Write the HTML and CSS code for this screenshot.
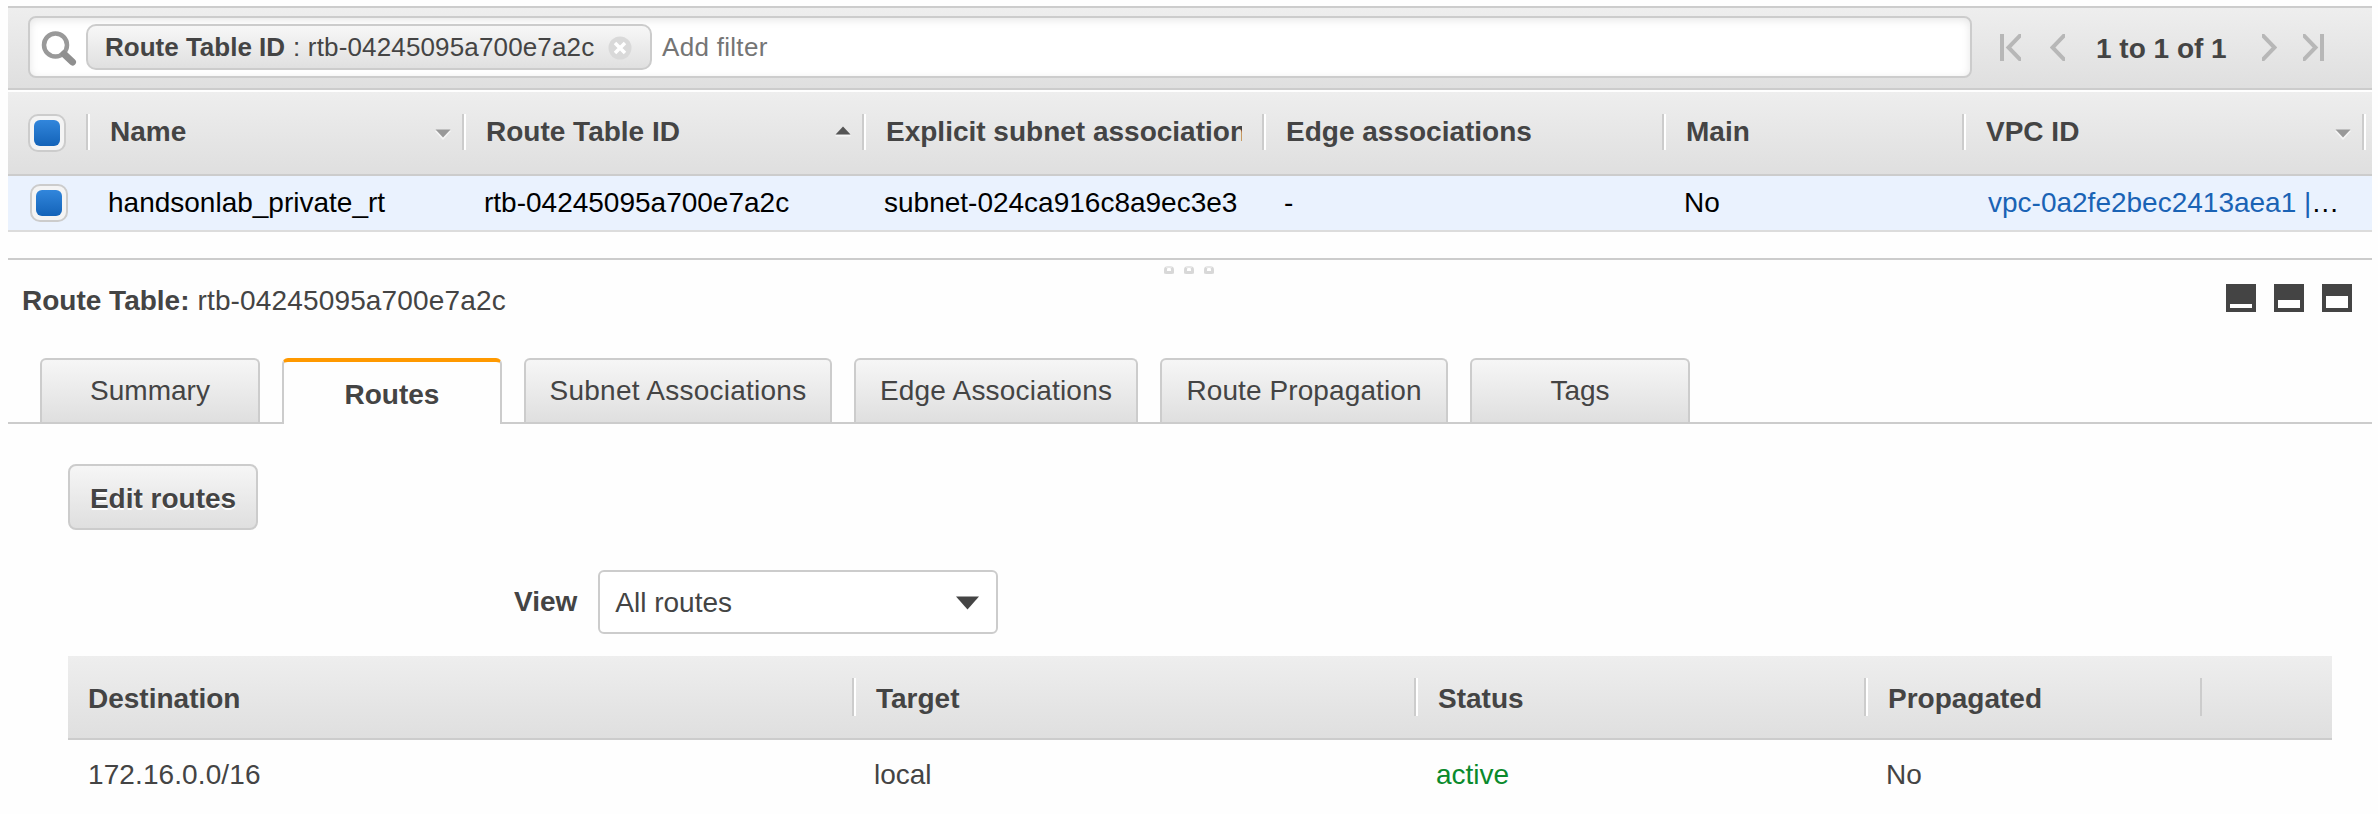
FILE: index.html
```html
<!DOCTYPE html>
<html lang="en">
<head>
<meta charset="utf-8">
<title>Route Tables</title>
<link rel="stylesheet" href="styles.css">
</head>
<body>
<div class="filterbar">
  <div class="search">
    <svg class="search-icon" width="36" height="38" viewBox="0 0 36 38"><circle cx="14.500" cy="14" r="11.500" fill="none" stroke="#999" stroke-width="4.500"/><path d="M23 23L31.500 31" stroke="#8f8f8f" stroke-width="7" stroke-linecap="round"/></svg>
    <div class="chip"><b>Route Table ID</b><span class="chip-value">: rtb-04245095a700e7a2c</span>
      <svg class="chip-close" width="24" height="24" viewBox="0 0 24 24"><circle cx="12" cy="12" r="11.500" fill="#d9d9d9"/><path d="M7 7L17 17M17 7L7 17" stroke="#fff" stroke-width="3.500"/></svg>
    </div>
    <span class="placeholder">Add filter</span>
  </div>
  <div class="pager">
    <svg class="first" width="21" height="27" viewBox="0 0 21 27"><path d="M2 0V27M24 -2.500L8.500 13.500L24 29.500" fill="none" stroke="#b7b7b7" stroke-width="4"/></svg>
    <svg class="prev" width="15" height="27" viewBox="0 0 15 27"><path d="M18 -2.500L2.500 13.500L18 29.500" fill="none" stroke="#b7b7b7" stroke-width="4"/></svg>
    <b class="range">1 to 1 of 1</b>
    <svg class="next" width="15" height="27" viewBox="0 0 15 27"><path d="M-3 -2.500L12.500 13.500L-3 29.500" fill="none" stroke="#b7b7b7" stroke-width="4"/></svg>
    <svg class="last" width="21" height="27" viewBox="0 0 21 27"><path d="M19 0V27M-3 -2.500L12.500 13.500L-3 29.500" fill="none" stroke="#b7b7b7" stroke-width="4"/></svg>
  </div>
</div>
<div class="grid grid-head">
  <div class="check-cell"><span class="check"></span></div>
  <div class="th">Name<svg class="sort" width="16" height="12" viewBox="0 0 16 12"><path d="M0 2H16L8 11Z" fill="#f6f6f6"/><path d="M0.500 0.500H15.500L8 8.500Z" fill="#999"/></svg></div>
  <div class="th">Route Table ID<svg class="sort sort-up" width="16" height="12" viewBox="0 0 16 12"><path d="M0.500 8.500H15.500V10.500H0.500Z" fill="#f6f6f6"/><path d="M0.500 8.500H15.500L8 0.500Z" fill="#555"/></svg></div>
  <div class="th"><span class="clip">Explicit subnet associations</span></div>
  <div class="th">Edge associations</div>
  <div class="th">Main</div>
  <div class="th">VPC ID<svg class="sort" width="16" height="12" viewBox="0 0 16 12"><path d="M0 2H16L8 11Z" fill="#f6f6f6"/><path d="M0.500 0.500H15.500L8 8.500Z" fill="#999"/></svg></div>
  <div class="th end"></div>
</div>
<div class="grid grid-row">
  <div class="check-cell"><span class="check"></span></div>
  <div class="td">handsonlab_private_rt</div>
  <div class="td">rtb-04245095a700e7a2c</div>
  <div class="td">subnet-024ca916c8a9ec3e3</div>
  <div class="td">-</div>
  <div class="td">No</div>
  <div class="td vpc"><a class="link">vpc-0a2fe2bec2413aea1 |</a>…</div>
</div>
<div class="splitter">
  <i class="grip"></i><i class="grip"></i><i class="grip"></i>
</div>
<div class="detail-head">
  <div class="detail-title"><b>Route Table:</b><span class="detail-id">rtb-04245095a700e7a2c</span></div>
  <div class="layouts">
    <span class="layout"><i class="pane pane-s"></i></span>
    <span class="layout"><i class="pane pane-m"></i></span>
    <span class="layout"><i class="pane pane-l"></i></span>
  </div>
</div>
<div class="tabs">
  <div class="tab w1">Summary</div>
  <div class="tab active w1">Routes</div>
  <div class="tab w3">Subnet Associations</div>
  <div class="tab w4">Edge Associations</div>
  <div class="tab w5">Route Propagation</div>
  <div class="tab w1">Tags</div>
</div>
<div class="panel">
  <button class="edit">Edit routes</button>
  <div class="view">
    <b>View</b>
    <div class="select"><span>All routes</span><svg width="23" height="14" viewBox="0 0 23 14"><path d="M0 0.500H23L11.500 13.500Z" fill="#444"/></svg></div>
  </div>
  <div class="routes routes-head">
    <div class="rh">Destination</div><div class="rh">Target</div><div class="rh">Status</div><div class="rh">Propagated</div><div class="rh last-col"></div>
  </div>
  <div class="routes routes-row">
    <div class="rd">172.16.0.0/16</div><div class="rd">local</div><div class="rd ok">active</div><div class="rd">No</div>
  </div>
</div>
</body>
</html>
```
FILE: styles.css
```css
* { box-sizing: border-box; }
html, body { margin: 0; background: #fefefe; }
body {
  width: 2378px; height: 814px; overflow: hidden;
  padding: 6px 6px 0 8px;
  font-family: "Liberation Sans", Arial, sans-serif;
  font-size: 28px; line-height: 32px; color: #444;
  white-space: nowrap;
}
svg { display: block; flex: none; }
.filterbar {
  height: 84px; display: flex; align-items: flex-start;
  padding: 8px 0 0 20px;
  border-top: 2px solid #ccc; border-bottom: 2px solid #ccc;
  background: linear-gradient(#eee, #dfdfdf);
}
.search {
  width: 1944px; height: 62px; display: flex; align-items: center;
  border: 2px solid #ccc; border-radius: 8px; background: #fff;
  box-shadow: inset 0 2px 8px rgba(0,0,0,.1);
  padding-left: 11px; color: #757575;
}
.search-icon { margin-top: 5px; }
.chip {
  margin-left: 9px; width: 566px; height: 46px;
  display: flex; align-items: center; padding: 0 18px 0 17px;
  border: 2px solid #ccc; border-radius: 10px;
  background: linear-gradient(#f7f7f7, #e0e0e0); color: #444;
  font-size: 26px;
}
.chip-value { margin-left: 8px; letter-spacing: .15px; }
.chip-close { margin: 2px 0 0 auto; }
.placeholder { margin-left: 10px; font-size: 26px; letter-spacing: .3px; }
.pager { display: flex; align-items: center; height: 62px; }
.first { margin-left: 28px; }
.prev { margin-left: 29px; }
.range { width: 132px; margin: 3px 0 0 31px; }
.next { margin-left: 34px; }
.last { margin-left: 26px; }
.grid { display: grid; grid-template-columns: 78px 376px 400px 400px 400px 300px 400px 10px; }
.grid-head {
  height: 84px; margin-top: 2px; align-items: start;
  background: linear-gradient(#eee, #dfdfdf);
  border-bottom: 2px solid #ccc; font-weight: bold;
}
.check-cell { padding: 22px 0 0 20px; }
.check {
  display: block; width: 38px; height: 38px;
  border: 2px solid #ccc; border-radius: 10px; background: #f4f4f4; padding: 4px;
}
.check::before {
  content: ""; display: block; width: 26px; height: 26px;
  border-radius: 6px; background: linear-gradient(#3186dc, #1463b8);
}
.th {
  height: 36px; margin-top: 22px; padding-left: 22px; padding-right: 11px; line-height: 40px;
  border-left: 2px solid #ccc; box-shadow: inset 2px 0 #fff;
  display: flex; align-items: center;
}
.th.end { padding: 0; }
.clip { width: 356px; overflow: hidden; }
.sort { margin-left: auto; margin-top: 5px; }
.sort-up { margin-top: -1px; }
.grid-row { height: 56px; background: #eaf2fe; border-bottom: 2px solid #dcdcdc; color: #000; }
.grid-row .check-cell { padding: 8px 0 0 22px; }
.td { padding-left: 22px; line-height: 54px; }
.vpc { padding-left: 26px; }
.link { color: #1a63b5; }
.splitter {
  height: 26px; margin-top: 26px; padding: 6px 2px 0 0;
  border-top: 2px solid #ccc; display: flex; justify-content: center; gap: 10px;
}
.grip { width: 10px; height: 8px; border: 3px solid #d8d8d8; border-top-color: #e6e6e6; border-top-width: 2px; border-radius: 4px 4px 2px 2px; background: #fff; }
.detail-head { height: 74px; display: flex; justify-content: space-between; }
.detail-title { padding-left: 14px; line-height: 34px; }
.detail-id { margin-left: 8px; letter-spacing: .15px; }
.layouts { display: flex; gap: 18px; margin-right: 20px; }
.layout { width: 30px; height: 28px; background: #444; display: flex; align-items: flex-end; padding: 4px; }
.pane { width: 22px; background: #fff; }
.pane-s { height: 4px; }
.pane-m { height: 8px; }
.pane-l { height: 12px; }
.tabs { display: flex; gap: 22px; height: 66px; padding-left: 32px; border-bottom: 2px solid #ccc; }
.tab {
  height: 64px; text-align: center; line-height: 62px;
  border: 2px solid #ccc; border-bottom: 0; border-radius: 6px 6px 0 0;
  background: linear-gradient(#f6f6f6, #dfdfdf);
}
.w1 { width: 220px; }
.w3 { width: 308px; letter-spacing: .25px; }
.w4 { width: 284px; letter-spacing: .2px; }
.w5 { width: 288px; letter-spacing: .1px; }
.tab.active { height: 66px; background: #fefefe; border-top: 4px solid #f90; font-weight: bold; line-height: 65px; }
.panel { padding: 40px 0 0 60px; }
.edit {
  display: block; width: 190px; height: 66px; padding: 3px 0 0;
  border: 2px solid #ccc; border-radius: 8px;
  background: linear-gradient(#f6f6f6, #dfdfdf);
  font: bold 28px "Liberation Sans", Arial, sans-serif; color: #444; text-shadow: 0 2px #fff;
}
.view { display: flex; align-items: center; margin: 40px 0 0 446px; line-height: 34px; }
.select {
  width: 400px; height: 64px; margin-left: 21px; padding: 2px 17px 0 15px;
  display: flex; align-items: center; justify-content: space-between;
  border: 2px solid #ccc; border-radius: 6px; background: #fff;
}
.routes { display: grid; grid-template-columns: 784px 562px 450px 336px 132px; width: 2264px; }
.routes-head {
  height: 84px; margin-top: 22px; font-weight: bold;
  background: linear-gradient(#eee, #dfdfdf); border-bottom: 2px solid #ccc;
}
.rh { height: 38px; margin-top: 22px; padding-left: 22px; line-height: 42px; border-left: 2px solid #ccc; box-shadow: inset 2px 0 #fff; }
.rh:first-child { border: 0; box-shadow: none; padding-left: 20px; }
.rh.last-col { box-shadow: none; }
.rd { padding-left: 22px; line-height: 70px; }
.rd:first-child { padding-left: 20px; letter-spacing: .1px; }
.ok { color: #0a8a2c; }
```
